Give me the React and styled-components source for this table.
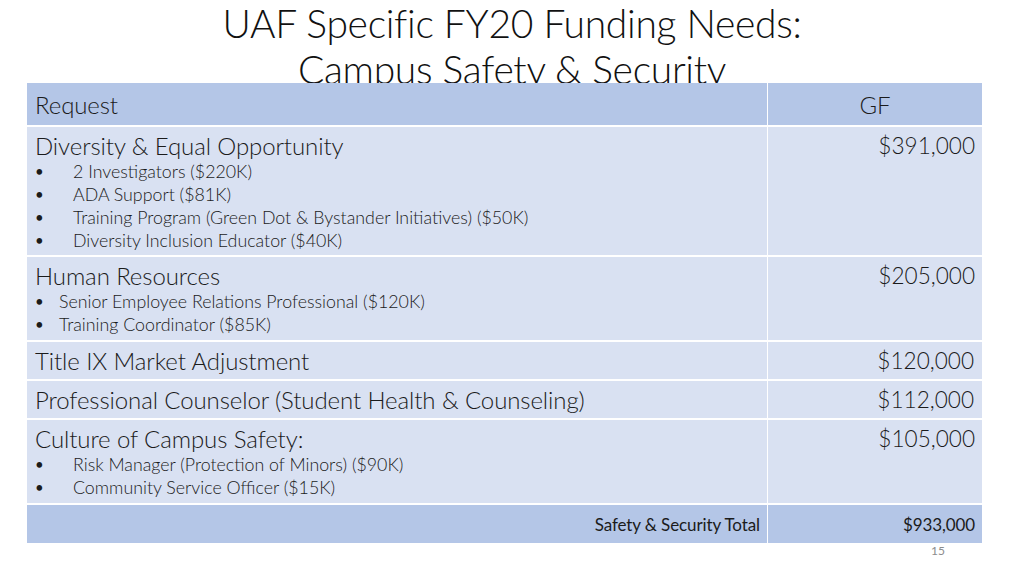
import React from "react";
import styled, { createGlobalStyle } from "styled-components";

const GlobalStyle = createGlobalStyle`
  html, body {
    margin: 0;
    padding: 0;
    background: #ffffff;
  }
  body {
    width: 1024px;
    height: 576px;
    overflow: hidden;
    font-family: "Lato", "Open Sans", sans-serif;
    color: #1b1b1b;
  }
`;

const Slide = styled.div`
  width: 1024px;
  height: 576px;
  display: flex;
  flex-direction: column;
  align-items: flex-start;
`;

const TitleBox = styled.div`
  width: 100%;
  height: 83px;
  overflow: hidden;
  text-align: center;
  font-family: "Lato", sans-serif;
  font-weight: 300;
  font-size: 39px;
  line-height: 46px;
  color: #111;
  letter-spacing: -0.3px;
`;

const TitleLine = styled.div`
  white-space: nowrap;
`;

const Table = styled.div`
  width: 955px;
  margin-left: 27px;
  display: grid;
  grid-template-columns: 740px 1fr;
  grid-template-rows: 42px 128px 83px 37px 37px 83px 38px;
  gap: 2px 1px;
  background: #ffffff;
`;

const Cell = styled.div`
  background: ${(p) => (p.$head ? "#b4c6e7" : "#d9e1f2")};
  padding: ${(p) => (p.$compact ? "0 8px" : "4px 7px 0 8px")};
  display: flex;
  flex-direction: column;
  align-items: ${(p) =>
    p.$align === "right" ? "flex-end" : p.$align === "center" ? "center" : "flex-start"};
  justify-content: ${(p) => (p.$compact ? "center" : "flex-start")};
  overflow: hidden;
`;

const Main = styled.div`
  font-weight: 300;
  font-size: 24px;
  line-height: 29px;
  white-space: nowrap;
  letter-spacing: -0.1px;
`;

const Amount = styled(Main)`
  font-size: 22.6px;
  letter-spacing: 0;
`;

const Bullets = styled.ul`
  list-style: none;
  margin: 0;
  padding: 0;
`;

const Bullet = styled.li`
  display: flex;
  font-weight: 300;
  font-size: 17.8px;
  line-height: 23px;
  white-space: nowrap;
  &::before {
    content: "•";
    font-weight: 400;
    font-size: 15px;
    width: ${(p) => (p.$wide ? "38px" : "24px")};
    flex: none;
  }
`;

const TotalText = styled.div`
  font-weight: 400;
  font-size: 17px;
  letter-spacing: -0.1px;
  white-space: nowrap;
  margin-right: -1px;
`;

const PageNum = styled.div`
  width: 955px;
  margin-left: 27px;
  display: flex;
  justify-content: flex-end;
  padding-right: 37px;
  box-sizing: border-box;
  font-size: 12px;
  line-height: 16px;
  color: #8c8c8c;
  font-weight: 400;
`;

const rows = [
  {
    title: "Diversity & Equal Opportunity",
    amount: "$391,000",
    wide: true,
    items: [
      "2 Investigators ($220K)",
      "ADA Support ($81K)",
      "Training Program (Green Dot & Bystander Initiatives) ($50K)",
      "Diversity Inclusion Educator ($40K)",
    ],
  },
  {
    title: "Human Resources",
    amount: "$205,000",
    wide: false,
    items: [
      "Senior Employee Relations Professional ($120K)",
      "Training Coordinator ($85K)",
    ],
  },
  { title: "Title IX Market Adjustment", amount: "$120,000", compact: true },
  {
    title: "Professional Counselor (Student Health & Counseling)",
    amount: "$112,000",
    compact: true,
  },
  {
    title: "Culture of Campus Safety:",
    amount: "$105,000",
    wide: true,
    items: [
      "Risk Manager (Protection of Minors) ($90K)",
      "Community Service Officer ($15K)",
    ],
  },
];

export default function App() {
  return (
    <>
      <GlobalStyle />
      <Slide>
        <TitleBox>
          <TitleLine>UAF Specific FY20 Funding Needs:</TitleLine>
          <TitleLine>Campus Safety &amp; Security</TitleLine>
        </TitleBox>
        <Table>
          <Cell $head $compact>
            <Main>Request</Main>
          </Cell>
          <Cell $head $compact $align="center">
            <Main>GF</Main>
          </Cell>
          {rows.map((r) => (
            <React.Fragment key={r.title}>
              <Cell $compact={r.compact}>
                <Main>{r.title}</Main>
                {r.items && (
                  <Bullets>
                    {r.items.map((it) => (
                      <Bullet key={it} $wide={r.wide}>
                        {it}
                      </Bullet>
                    ))}
                  </Bullets>
                )}
              </Cell>
              <Cell $compact={r.compact} $align="right">
                <Amount>{r.amount}</Amount>
              </Cell>
            </React.Fragment>
          ))}
          <Cell $head $compact $align="right">
            <TotalText>Safety &amp; Security Total</TotalText>
          </Cell>
          <Cell $head $compact $align="right">
            <TotalText>$933,000</TotalText>
          </Cell>
        </Table>
        <PageNum>15</PageNum>
      </Slide>
    </>
  );
}
